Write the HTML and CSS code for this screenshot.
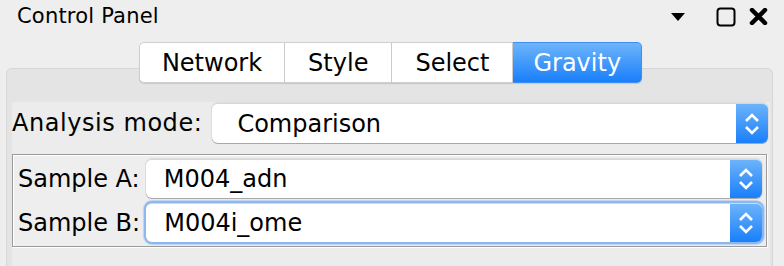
FILE: index.html
```html
<!DOCTYPE html>
<html lang="en">
<head>
  <meta charset="UTF-8">
  <title>Control Panel</title>
  <link rel="stylesheet" href="styles.css">
</head>
<body>

  <div class="window">

    <header class="titlebar">
      <span class="title">Control Panel</span>
      <div class="title-icons">
        <svg class="icon-menu" width="16" height="10" viewBox="0 0 16 10">
          <path d="M1 1 H15 L8 9 Z" fill="#000"/>
        </svg>
        <svg class="icon-float" width="20" height="20" viewBox="0 0 20 20">
          <rect x="1.5" y="1.5" width="17" height="17" rx="3" fill="none" stroke="#000" stroke-width="2"/>
        </svg>
        <svg class="icon-close" width="19" height="17" viewBox="0 0 19 17">
          <path d="M3 2 L16 15 M16 2 L3 15" stroke="#000" stroke-width="4.5" stroke-linecap="round"/>
        </svg>
      </div>
    </header>

    <nav class="tabs">
      <div class="tab">Network</div>
      <div class="tab">Style</div>
      <div class="tab">Select</div>
      <div class="tab tab-active">Gravity</div>
    </nav>

    <section class="panel">
      <div class="panel-body">

        <div class="row">
          <label class="row-label label-mode">Analysis mode:</label>
          <div class="combo combo-mode">
            <span class="combo-value">Comparison</span>
            <span class="combo-arrow">
              <svg width="16" height="26" viewBox="0 0 16 26">
                <path d="M2 10 L8 4 L14 10 M2 16 L8 22 L14 16" fill="none" stroke="#fff" stroke-width="2.6"/>
              </svg>
            </span>
          </div>
        </div>

        <div class="group">
          <div class="row row-sample">
            <label class="row-label">Sample A:</label>
            <div class="combo combo-sample">
              <span class="combo-value">M004_adn</span>
              <span class="combo-arrow">
                <svg width="16" height="26" viewBox="0 0 16 26">
                  <path d="M2 10 L8 4 L14 10 M2 16 L8 22 L14 16" fill="none" stroke="#fff" stroke-width="2.6"/>
                </svg>
              </span>
            </div>
          </div>
          <div class="row row-sample">
            <label class="row-label">Sample B:</label>
            <div class="combo combo-sample combo-focus">
              <span class="combo-value">M004i_ome</span>
              <span class="combo-arrow">
                <svg width="16" height="26" viewBox="0 0 16 26">
                  <path d="M2 10 L8 4 L14 10 M2 16 L8 22 L14 16" fill="none" stroke="#fff" stroke-width="2.6"/>
                </svg>
              </span>
            </div>
          </div>
        </div>

      </div>
    </section>

  </div>

</body>
</html>
```

FILE: styles.css
```css
html,
body {
  margin: 0;
  padding: 0;
  height: 100%
}

body {
  background: #eeeeee;
  font-family: "DejaVu Sans", "Noto Sans", sans-serif;
  color: #000;
  overflow: hidden
}

.window {
  display: flex;
  flex-direction: column;
  height: 100%
}

.titlebar {
  display: flex;
  align-items: center;
  justify-content: space-between;
  height: 34px;
  padding: 0 16px 0 17px
}

.title {
  font-size: 21px;
  letter-spacing: 0.2px;
  margin-top: -2px
}

.title-icons {
  display: flex;
  align-items: center;
  margin-top: -1px
}

.icon-menu {
  margin-right: 30px
}

.icon-float {
  margin-right: 13px
}

.tabs {
  display: flex;
  justify-content: center;
  margin: 8px 0 -15px -3px;
  position: relative;
  z-index: 1
}

.tab {
  height: 39px;
  line-height: 41px;
  font-size: 24px;
  padding: 0 22px;
  background: #fff;
  border: 1px solid #cfcfcf;
  border-left: none;
  box-shadow: 0 1px 1px rgba(0, 0, 0, 0.12)
}

.tab:first-child {
  border-left: 1px solid #cfcfcf;
  border-radius: 5px 0 0 5px
}

.tab:nth-child(2) {
  padding: 0 23px
}

.tab:nth-child(3) {
  padding: 0 23px
}

.tab-active {
  color: #fff;
  padding: 0 20px;
  border-color: #3d8ff6;
  border-radius: 0 5px 5px 0;
  background: linear-gradient(#6db4fa, #1a7ffb)
}

.panel {
  flex-grow: 1;
  margin: 0 11px 0 6px;
  padding: 33px 2px 0 5px;
  background: #e4e4e4;
  border: 1px solid #d6d6d6;
  border-bottom: none;
  border-radius: 6px 6px 0 0
}

.panel-body {
  background: #ececec;
  height: 100%;
  padding-top: 1px
}

.row {
  display: flex;
  align-items: center
}

.row-label {
  font-size: 24px;
  white-space: nowrap
}

.label-mode {
  letter-spacing: 0.55px
}

.combo {
  flex-grow: 1;
  display: flex;
  align-items: center;
  justify-content: space-between;
  background: #fff;
  border-radius: 6px;
  border-top: 1px solid #d8d8d8;
  box-shadow: 0 1px 0 #a9a9a9, 0 0 0 1px #dcdcdc;
  overflow: hidden
}

.combo-value {
  font-size: 24px
}

.combo-arrow {
  display: flex;
  align-items: center;
  justify-content: center;
  align-self: stretch;
  width: 32px;
  background: linear-gradient(#6cb3fa, #1a7ffb)
}

.combo-mode {
  height: 39px;
  margin: 0 2px 0 10px
}

.combo-mode .combo-value {
  padding-left: 25px
}

.group {
  margin: 11px 3px 0 0;
  padding: 4px 4px 4px 5px;
  border: 1px solid #9b9b9b;
  box-shadow: 1px 1px 0 #fff, inset 1px 1px 0 #fff;
  background: #eeeeee
}

.row-sample + .row-sample {
  margin-top: 5px
}

.combo-sample {
  height: 38px;
  margin-left: 6px
}

.combo-sample .combo-value {
  padding-left: 18px
}

.combo-focus {
  box-shadow: 0 0 0 2px #8cb8f0, 0 0 1px 3px rgba(120, 170, 240, 0.4)
}
```
